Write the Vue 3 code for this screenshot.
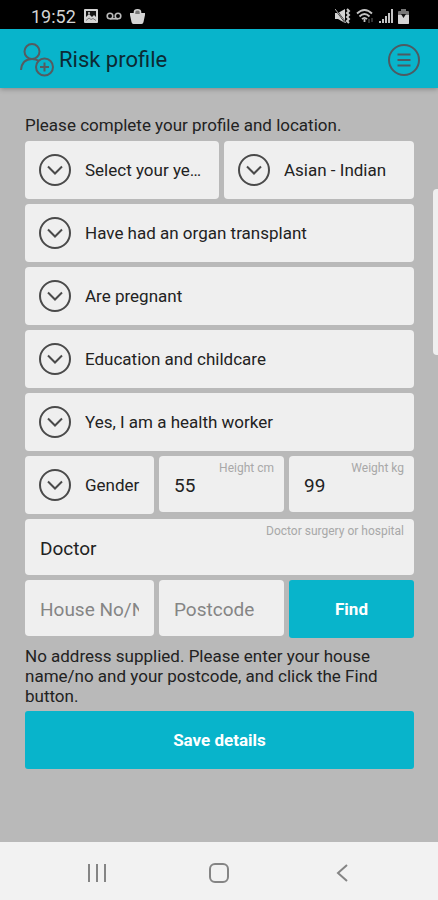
<script setup>
import { ref } from 'vue'

const year = ref('Select your year of birth')
const ethnicity = ref('Asian - Indian')
const conditions = ref([
  { id: 'transplant', label: 'Transplant status', value: 'Have had an organ transplant' },
  { id: 'pregnancy', label: 'Pregnancy status', value: 'Are pregnant' },
  { id: 'occupation', label: 'Occupation', value: 'Education and childcare' },
  { id: 'health-worker', label: 'Health worker', value: 'Yes, I am a health worker' },
])
const gender = ref('Gender')
const height = ref('55')
const weight = ref('99')
const doctor = ref('Doctor')
const house = ref('')
const postcode = ref('')
</script>

<template>
  <div class="screen">
    <div class="status">
      <div class="group left">
        <span class="clock">19:52</span>
        <svg width="14" height="14" viewBox="0 0 14 14"><rect width="14" height="14" rx="1" fill="#d4d4d4" /><path d="M2 2h10v6l-2-2-2 2-3-3-3 3z" fill="#151515" /><path d="M2 11.500l3-2.500 2 1.500 2-1 3 2" fill="none" stroke="#777" /><circle cx="5" cy="4" r="1" fill="#d4d4d4" /></svg>
        <svg width="16" height="14" viewBox="0 0 16 14" fill="none" stroke="#bbb" stroke-width="1.6"><circle cx="4" cy="7" r="2.8" /><circle cx="12" cy="7" r="2.8" /><path d="M4 9.8h8" /></svg>
        <svg width="15" height="15" viewBox="0 0 15 15"><path d="M0 4h15v2l-1.500 7q-.3 2-2 2h-8q-1.700 0-2-2L0 6z" fill="#d4d4d4" /><path d="M4.500 5V3a3 2.200 0 0 1 6 0v2" fill="#777" stroke="#d4d4d4" stroke-width="1.600" /></svg>
      </div>
      <div class="group right">
        <svg width="16" height="16" viewBox="0 0 16 16"><path d="M0 5h3l7-4v14l-7-4H0z" fill="#d4d4d4" /><path d="M1 2l9 12" stroke="#000" stroke-width="1.500" /><path d="M0 1l11 14" stroke="#aaa" /><path d="M12 1l2 2-2 2 2 2-2 2 2 2-2 2 2 2" fill="none" stroke="#ccc" stroke-width="2" /></svg>
        <svg width="18" height="16" viewBox="0 0 18 16" fill="none" stroke="#c4c4c4" stroke-width="1.800"><path d="M1 5.500Q8.500-1.500 16 5.500M3.500 8.500Q8.500 3.500 13.500 8.500M6 11.200Q8.500 8.500 11 11.200" /><path d="M8.500 11v3" /><path d="M13 15v-4M16 10v4" stroke="#555" stroke-width="1.200" /></svg>
        <svg width="14" height="14" viewBox="0 0 14 14" fill="#c4c4c4"><path d="M0 12h2v2H0zM3 10h2v4H3zM6 7h2v7H6zM9 4h2v10H9z" /><path d="M12 0h2v14h-2z" /></svg>
        <svg width="11" height="15" viewBox="0 0 11 15"><path d="M3 0h5v2h2q1 0 1 1v11q0 1-1 1H1q-1 0-1-1V3q0-1 1-1h2z" fill="#777" /><path d="M0 6h11v8q0 1-1 1H1q-1 0-1-1z" fill="#d4d4d4" /><path d="M3 5h5L5.500 9z" fill="#111" /></svg>
      </div>
    </div>

    <header class="bar">
      <svg width="36" height="34" viewBox="0 0 36 34" fill="none" stroke="#555b60" stroke-width="2"><circle cx="13" cy="8.500" r="7.500" /><path d="M2 27Q3 16 13 16q4 0 7 2" /><circle cx="25.500" cy="24" r="8.500" /><path d="M25.500 19.500v9M21 24h9" /></svg>
      <h1>Risk profile</h1>
      <button class="menu" type="button" aria-label="Menu">
        <svg width="32" height="32" viewBox="0 0 32 32" fill="none" stroke="#4d5a62" stroke-width="2"><circle cx="16" cy="16" r="15" /><path d="M9.500 10.500h13M9.500 16h13M9.500 21.500h13" /></svg>
      </button>
    </header>

    <main>
      <form @submit.prevent>
        <p class="intro">Please complete your profile and location.</p>

        <div class="row halves">
          <div class="card pick">
            <svg class="chev" viewBox="0 0 32 32"><circle cx="16" cy="16" r="15" /><path d="M9 12.500l7 7 7-7" /></svg>
            <select v-model="year" aria-label="Year of birth"><option>Select your year of birth</option></select>
          </div>
          <div class="card pick">
            <svg class="chev" viewBox="0 0 32 32"><circle cx="16" cy="16" r="15" /><path d="M9 12.500l7 7 7-7" /></svg>
            <select v-model="ethnicity" aria-label="Ethnicity"><option>Asian - Indian</option></select>
          </div>
        </div>

        <div v-for="c in conditions" :key="c.id" class="card pick">
          <svg class="chev" viewBox="0 0 32 32"><circle cx="16" cy="16" r="15" /><path d="M9 12.500l7 7 7-7" /></svg>
          <select v-model="c.value" :aria-label="c.label"><option>{{ c.value }}</option></select>
        </div>

        <div class="row thirds">
          <div class="card pick">
            <svg class="chev" viewBox="0 0 32 32"><circle cx="16" cy="16" r="15" /><path d="M9 12.500l7 7 7-7" /></svg>
            <select v-model="gender" aria-label="Gender"><option>Gender</option></select>
          </div>
          <div class="card field">
            <label for="height">Height cm</label>
            <input id="height" v-model="height" type="text" inputmode="numeric" />
          </div>
          <div class="card field">
            <label for="weight">Weight kg</label>
            <input id="weight" v-model="weight" type="text" inputmode="numeric" />
          </div>
        </div>

        <div class="card field">
          <label for="doctor">Doctor surgery or hospital</label>
          <input id="doctor" v-model="doctor" type="text" />
        </div>

        <div class="row thirds">
          <div class="card field">
            <input v-model="house" type="text" placeholder="House No/Name" aria-label="House number or name" />
          </div>
          <div class="card field">
            <input v-model="postcode" type="text" placeholder="Postcode" aria-label="Postcode" />
          </div>
          <button class="action" type="button">Find</button>
        </div>

        <p class="note">No address supplied. Please enter your house name/no and your postcode, and click the Find button.</p>
        <button class="action" type="submit">Save details</button>
      </form>
      <span class="thumb"></span>
    </main>

    <nav>
      <button type="button" aria-label="Recent apps"><svg width="20" height="20" viewBox="0 0 20 20"><path d="M2 1v18M10 1v18M18 1v18" /></svg></button>
      <button type="button" aria-label="Home"><svg width="20" height="20" viewBox="0 0 20 20"><rect x="1" y="1" width="18" height="18" rx="5" /></svg></button>
      <button type="button" aria-label="Back"><svg width="20" height="20" viewBox="0 0 20 20"><path d="M15 2L6 10l9 8" /></svg></button>
    </nav>
  </div>
</template>

<style>
body {
  background: #b9b9b9;
}
</style>

<style scoped>
* {
  box-sizing: border-box;
}
.screen {
  min-height: 100vh;
  display: flex;
  flex-direction: column;
  font-family: Roboto, sans-serif;
  color: #222;
  background: #b9b9b9;
}
.status {
  height: 29px;
  padding: 3px 29px 0 31px;
  display: flex;
  align-items: center;
  justify-content: space-between;
  background: #000;
}
.group {
  display: flex;
  align-items: center;
}
.left {
  gap: 8px;
}
.right {
  gap: 5px;
}
.clock {
  font-size: 18px;
  color: #d4d4d4;
}
.bar {
  position: relative;
  height: 59px;
  padding: 2px 18px 0 19px;
  display: flex;
  align-items: center;
  gap: 4px;
  background: #08b4cb;
  box-shadow: 0 1px 5px rgba(0, 0, 0, 0.3);
}
h1 {
  flex: 1;
  margin: 0;
  font-size: 22px;
  font-weight: 400;
  color: #0c2a33;
}
button {
  padding: 0;
  border: 0;
  background: none;
  font-family: inherit;
}
.menu,
nav button {
  display: flex;
  align-items: center;
  justify-content: center;
}
main {
  position: relative;
  flex: 1;
  padding: 27px 24px 20px 25px;
}
form {
  display: flex;
  flex-direction: column;
  gap: 5px;
}
p {
  margin: 0;
  font-size: 17px;
  line-height: 20px;
}
.intro {
  padding-bottom: 1px;
}
.note {
  padding: 3px 0 0;
}
.row {
  display: grid;
  gap: 5px;
  align-items: start;
}
.halves {
  grid-template-columns: 194fr 190fr;
}
.thirds {
  grid-template-columns: 129fr 125fr 125fr;
}
.card {
  min-width: 0;
  border-radius: 4px;
  background: #efefef;
}
.pick {
  display: grid;
  height: 58px;
  align-items: center;
}
.pick > * {
  grid-area: 1 / 1;
}
.chev {
  width: 32px;
  height: 32px;
  margin-left: 14px;
  fill: none;
  stroke: #4a4a4a;
  stroke-width: 2;
  pointer-events: none;
}
select {
  width: 100%;
  min-width: 0;
  height: 58px;
  padding: 0 14px 0 60px;
  border: 0;
  appearance: none;
  background: transparent;
  font-family: inherit;
  font-size: 17px;
  color: #222;
  text-overflow: ellipsis;
}
.field {
  display: grid;
  height: 56px;
}
.field > * {
  grid-area: 1 / 1;
}
label {
  justify-self: end;
  align-self: start;
  padding: 5px 10px 0 0;
  font-size: 12px;
  line-height: 14px;
  color: #a8a8a8;
}
input {
  width: 100%;
  min-width: 0;
  height: 56px;
  padding: 2px 15px 0;
  border: 0;
  background: transparent;
  font-family: inherit;
  font-size: 19px;
  color: #222;
}
input::placeholder {
  color: #858585;
}
.action {
  height: 58px;
  border-radius: 3px;
  background: #08b4cb;
  font-size: 17px;
  font-weight: 700;
  color: #fff;
}
.thumb {
  position: absolute;
  top: 101px;
  right: 0;
  width: 5px;
  height: 166px;
  border-radius: 4px 0 0 4px;
  background: #efefef;
}
nav {
  height: 58px;
  padding: 3px 35px 0 36px;
  display: grid;
  grid-template-columns: repeat(3, 1fr);
  background: #f2f2f2;
}
nav svg {
  fill: none;
  stroke: #858585;
  stroke-width: 2;
}
</style>
